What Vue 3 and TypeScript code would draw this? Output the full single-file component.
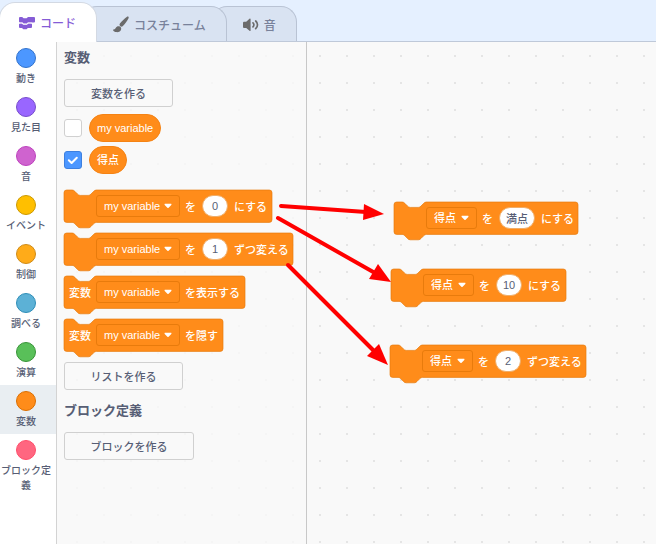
<script setup lang="ts">
import { ref } from 'vue'

interface Category {
  name: string
  fill: string
  edge: string
}

interface StackBlock {
  id: string
  width: number
  prefix?: string
  variable: string
  joiner: string
  value?: string
  suffix?: string
  x?: number
  y?: number
}

const categories: Category[] = [
  { name: '動き', fill: '#4c97ff', edge: '#3373cc' },
  { name: '見た目', fill: '#9966ff', edge: '#774dcb' },
  { name: '音', fill: '#cf63cf', edge: '#bd42bd' },
  { name: 'イベント', fill: '#ffbf00', edge: '#cc9900' },
  { name: '制御', fill: '#ffab19', edge: '#cf8b17' },
  { name: '調べる', fill: '#5cb1d6', edge: '#2e8eb8' },
  { name: '演算', fill: '#59c059', edge: '#389438' },
  { name: '変数', fill: '#ff8c1a', edge: '#db6e00' },
  { name: 'ブロック定義', fill: '#ff6680', edge: '#ff4d6a' },
]
const selected = ref('変数')

const monitors = ref([
  { name: 'my variable', shown: false },
  { name: '得点', shown: true },
])

const blocks = ref<StackBlock[]>([
  { id: 'set', width: 208, variable: 'my variable', joiner: 'を', value: '0', suffix: 'にする' },
  { id: 'change', width: 229, variable: 'my variable', joiner: 'を', value: '1', suffix: 'ずつ変える' },
  { id: 'show', width: 181, prefix: '変数', variable: 'my variable', joiner: 'を表示する' },
  { id: 'hide', width: 159, prefix: '変数', variable: 'my variable', joiner: 'を隠す' },
  { id: 'set-full', width: 184, variable: '得点', joiner: 'を', value: '満点', suffix: 'にする', x: 87, y: 160 },
  { id: 'set-ten', width: 175, variable: '得点', joiner: 'を', value: '10', suffix: 'にする', x: 84, y: 227 },
  { id: 'change-two', width: 196, variable: '得点', joiner: 'を', value: '2', suffix: 'ずつ変える', x: 83, y: 303 },
])

const groups = [
  { area: 'palette', placed: false },
  { area: 'canvas', placed: true },
]

function blocksIn(placed: boolean): StackBlock[] {
  return blocks.value.filter((b) => (b.x !== undefined) === placed)
}

// Outline of a stack block, in block units; one unit is 0.675 px.
const unit = 0.675
function outline(width: number): string {
  const w = width / unit
  return (
    `M0 4A4 4 0 0 1 4 0H12c2 0 3 1 4 2l4 4c1 1 2 2 4 2h12c2 0 3-1 4-2l4-4c1-1 2-2 4-2H${w - 4}` +
    'a4 4 0 0 1 4 4v40a4 4 0 0 1-4 4H48c-2 0-3 1-4 2l-4 4c-1 1-2 2-4 2H24c-2 0-3-1-4-2l-4-4c-1-1-2-2-4-2' +
    'H4a4 4 0 0 1-4-4z'
  )
}
</script>

<template>
  <div class="editor">
    <nav class="tabs">
      <button class="tab active" type="button">
        <svg width="18" height="14" viewBox="0 0 18 14" fill="#855cd6">
          <path d="M2 1h2.200l1.400 1.200h3L10 1h6a1 1 0 0 1 1 1v3.600a1 1 0 0 1-1 1h-6L8.600 7.800h-3L4.200 6.600H2a1 1 0 0 1-1-1V2a1 1 0 0 1 1-1z" />
          <path d="M2 7.400h1.800l1.400 1.300h3.800l1.400-1.300H13a1 1 0 0 1 1 1v2.700a1 1 0 0 1-1 1H9.800L8.600 13.300H5.300L4 12.100H2a1 1 0 0 1-1-1V8.400a1 1 0 0 1 1-1z" />
          <path d="M1 7h3.800l1 .9h3l1-.9H14" fill="none" stroke="#fff" stroke-width=".7" />
        </svg>
        <span>コード</span>
      </button>
      <button class="tab costume" type="button">
        <svg width="18" height="18" viewBox="0 0 18 18" fill="#6b6b6b">
          <path d="M16.200 1.600c.7.500.6 1.200.2 2-1 2.200-3.300 5.500-5.500 7.500-.8.700-1.700.8-2.600.1-.9-.8-1-1.700-.4-2.600 1.800-2.600 4.800-5.300 6.800-6.700.6-.4 1.100-.6 1.500-.3z" />
          <path d="M7 11.300c1.500.2 2.400 1.300 2.200 2.600-.4 2.300-2.600 3.500-4.900 3.200-1.500-.2-2.700-.9-3.200-1.900-.2-.5.100-.7.600-.7 1.200 0 1.500-.5 2-1.400.7-1.300 1.800-2 3.300-1.800z" />
        </svg>
        <span>コスチューム</span>
      </button>
      <button class="tab sound" type="button">
        <svg width="18" height="18" viewBox="0 0 18 18" fill="#6b6b6b">
          <path d="M8.600 4.200v11.200c0 .6-.6.800-1.100.4L4.200 13H2.300C1.500 13 1 12.500 1 11.700V8c0-.8.500-1.300 1.300-1.300h1.900l3.300-2.900c.5-.4 1.100-.2 1.100.4z" />
          <path d="M11 7.800c1.200 1.100 1.200 3 0 4.100M13.700 6c2.400 2.200 2.400 5.500 0 7.700" fill="none" stroke="#6b6b6b" stroke-width="1.700" stroke-linecap="round" />
        </svg>
        <span>音</span>
      </button>
    </nav>

    <main class="body">
      <div class="categories">
        <button
          v-for="c in categories"
          :key="c.name"
          type="button"
          class="category"
          :class="{ selected: c.name === selected }"
          @click="selected = c.name"
        >
          <span class="bubble" :style="{ background: c.fill, borderColor: c.edge }"></span>
          <span>{{ c.name }}</span>
        </button>
      </div>

      <section v-for="g in groups" :key="g.area" :class="g.area">
        <template v-if="!g.placed">
          <h2>変数</h2>
          <button class="make" type="button">変数を作る</button>
          <div class="monitors">
            <label v-for="m in monitors" :key="m.name" class="monitor">
              <span class="check">
                <input v-model="m.shown" type="checkbox" />
                <svg v-if="m.shown" width="18" height="18" viewBox="0 0 18 18">
                  <path d="M4.800 9.300l2.800 2.700 5.200-5.300" fill="none" stroke="#fff" stroke-width="2" stroke-linecap="round" stroke-linejoin="round" />
                </svg>
              </span>
              <span class="reporter">{{ m.name }}</span>
            </label>
          </div>
        </template>

        <div class="stack">
          <div
            v-for="b in blocksIn(g.placed)"
            :key="b.id"
            class="block"
            :class="{ placed: g.placed }"
            :style="{ width: b.width + 'px', left: b.x + 'px', top: b.y + 'px' }"
          >
            <svg class="shape" :width="b.width" height="39">
              <path :d="outline(b.width)" :transform="`scale(${unit})`" fill="#ff8c1a" stroke="#e67a0c" stroke-width="1" />
            </svg>
            <span class="prefix">{{ b.prefix }}</span>
            <span class="field" :class="{ short: b.variable === '得点' }">
              <select v-model="b.variable" aria-label="変数">
                <option v-for="m in monitors" :key="m.name">{{ m.name }}</option>
              </select>
              <svg width="8" height="6" viewBox="0 0 8 6">
                <path d="M1.200.8h5.600c.7 0 .9.700.5 1.100L4.600 4.800c-.4.400-.8.400-1.200 0L.7 1.900C.3 1.500.5.8 1.200.8z" fill="#fff" />
              </svg>
            </span>
            <span>{{ b.joiner }}</span>
            <input
              v-if="b.value !== undefined"
              v-model="b.value"
              class="value"
              :class="{ wide: b.value === '満点' }"
              type="text"
              aria-label="値"
            />
            <span v-if="b.suffix">{{ b.suffix }}</span>
          </div>
        </div>

        <template v-if="!g.placed">
          <button class="make list" type="button">リストを作る</button>
          <h2 class="second">ブロック定義</h2>
          <button class="make custom" type="button">ブロックを作る</button>
        </template>
      </section>
    </main>

    <svg class="arrows" width="400" height="400" fill="#f00" stroke="#f00">
      <g stroke-width="4" stroke-linecap="round">
        <path d="M281 206L366 212" />
        <path d="M278 218L375 273" />
        <path d="M288 265L375 352" />
      </g>
      <g stroke="none">
        <path d="M364 204L384 214L363 220z" />
        <path d="M378 264L391 282L369 279z" />
        <path d="M379 344L388 365L367 356z" />
      </g>
    </svg>
  </div>
</template>

<style>
body {
  margin: 0;
}
</style>

<style scoped>
.editor {
  position: relative;
  display: flex;
  flex-direction: column;
  min-height: 100vh;
  overflow: hidden;
  background: #e5f0ff;
  color: #575e75;
  font-family: "Liberation Sans", "Noto Sans CJK JP", sans-serif;
  font-size: 11px;
  font-weight: 500;
}
button,
input,
select {
  box-sizing: border-box;
  margin: 0;
  padding: 0;
  font: inherit;
  color: inherit;
}
.tabs {
  display: flex;
  align-items: flex-end;
  height: 41px;
  border-bottom: 1px solid #bfc9d9;
}
.tab {
  position: relative;
  display: flex;
  align-items: center;
  gap: 4px;
  height: 35px;
  margin-left: -16px;
  padding: 0 20px 0 30px;
  border: 1px solid #b9c3d4;
  border-bottom: 0;
  border-radius: 16px 16px 0 0;
  background: #d9e3f2;
  color: #78819a;
  font-size: 12px;
}
.tab.active {
  z-index: 3;
  height: 40px;
  margin: 0 0 -1px -1px;
  padding: 0 20px 0 18px;
  background: #fff;
  border-color: #d3d9e3;
  color: #855cd6;
}
.tab.costume {
  z-index: 2;
}
.tab.sound {
  z-index: 1;
}
.body {
  display: flex;
  flex: 1;
}
.categories {
  flex: none;
  width: 56px;
  background: #fff;
  border-right: 1px solid #d3d3d3;
}
.category {
  display: flex;
  flex-direction: column;
  align-items: center;
  gap: 3px;
  width: 100%;
  min-height: 49px;
  padding: 6px 4px 4px 0;
  border: 0;
  background: none;
  font-size: 10px;
  line-height: 15px;
}
.category.selected {
  background: #e9eef2;
}
.bubble {
  box-sizing: border-box;
  width: 20px;
  height: 20px;
  border: 1px solid;
  border-radius: 50%;
}
.palette {
  flex: none;
  box-sizing: border-box;
  width: 250px;
  padding: 7px;
  border-right: 1px solid #c8c8c8;
  background: radial-gradient(circle at 20px 14px, #f5f5f5 1px, transparent 1px) 0 0 / 27px 27px #f9f9f9;
}
.canvas {
  position: relative;
  flex: 1;
  background: radial-gradient(circle at 13px 14px, #e5e5e5 1px, transparent 1px) 0 0 / 27px 27px #f9f9f9;
}
h2 {
  margin: 0 0 12px;
  font-size: 13px;
  font-weight: 700;
  line-height: 18px;
}
h2.second {
  margin-top: 12px;
}
.make {
  display: block;
  width: 109px;
  height: 28px;
  padding-bottom: 1px;
  border: 1px solid #d0d0d0;
  border-radius: 3px;
  background: transparent;
}
.make.list {
  width: 119px;
}
.make.custom {
  width: 130px;
}
.monitors {
  display: flex;
  flex-direction: column;
  gap: 4px;
  margin: 7px 0 16px;
}
.monitor {
  display: flex;
  align-items: center;
  gap: 7px;
  height: 28px;
}
.check {
  position: relative;
  display: flex;
}
.check input {
  appearance: none;
  width: 18px;
  height: 18px;
  border: 1px solid #d0d0d0;
  border-radius: 3px;
  background: #fff;
}
.check input:checked {
  border-color: #3d80e0;
  background: #4c97ff;
}
.check svg {
  position: absolute;
  inset: 0;
}
.reporter {
  box-sizing: border-box;
  height: 28px;
  padding: 0 7px;
  border: 1px solid #f58314;
  border-radius: 14px;
  background: #ff8c1a;
  color: #fff;
  line-height: 26px;
}
.palette .stack {
  display: flex;
  flex-direction: column;
  gap: 11px;
  margin-bottom: 11px;
}
.block {
  position: relative;
  display: flex;
  align-items: center;
  gap: 5px;
  height: 32px;
  color: #fff;
  white-space: nowrap;
}
.block.placed {
  position: absolute;
}
.block > * {
  position: relative;
}
.block .shape {
  position: absolute;
  left: 0;
  top: 0;
  overflow: visible;
}
.prefix {
  box-sizing: border-box;
  width: 27px;
  padding-left: 5px;
}
.field {
  display: flex;
  align-items: center;
  width: 84px;
}
.field.short {
  width: 51px;
}
.field select {
  appearance: none;
  width: 100%;
  height: 22px;
  padding-left: 7px;
  border: 1px solid #e87b0c;
  border-radius: 3px;
  background: #ff8c1a;
}
.field svg {
  position: absolute;
  right: 8px;
  pointer-events: none;
}
.block .value {
  width: 26px;
  height: 22px;
  margin: 0 1px;
  border: 1px solid #f0ad68;
  border-radius: 11px;
  background: #fff;
  color: #575e75;
  text-align: center;
}
.block .value.wide {
  width: 36px;
}
.arrows {
  position: absolute;
  left: 0;
  top: 0;
  z-index: 4;
  pointer-events: none;
}
</style>
